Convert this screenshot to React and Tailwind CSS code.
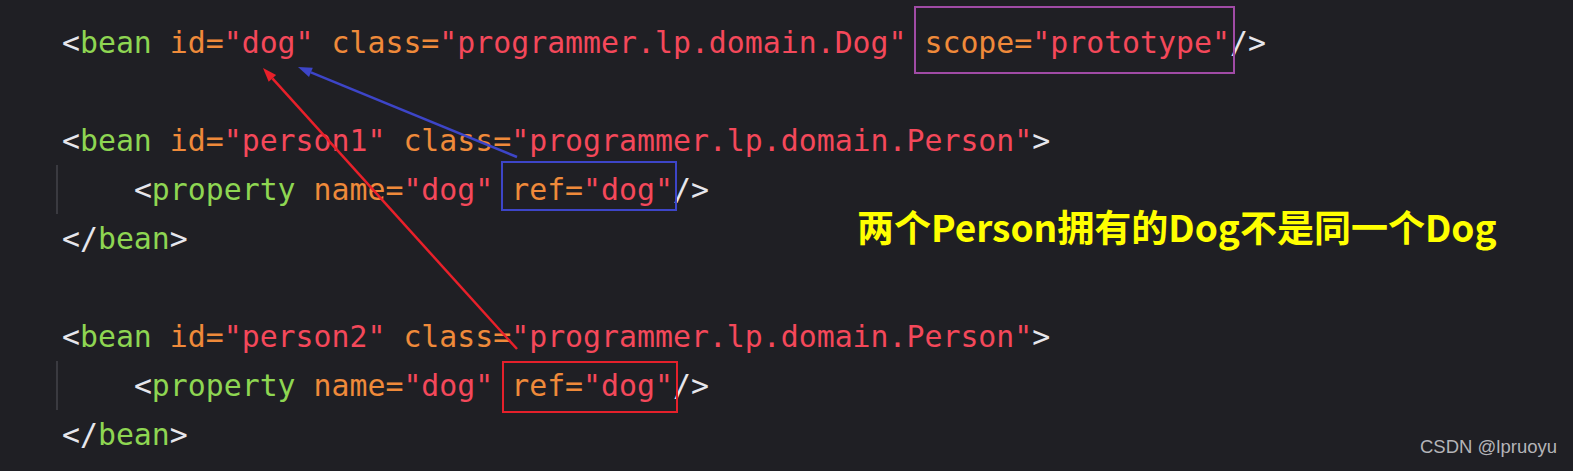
import React from "react";

const G = ({ children }) => <span className="text-[#8ed652]">{children}</span>;
const W = ({ children }) => <span className="text-[#e6e6ec]">{children}</span>;
const O = ({ children }) => <span className="text-[#ef8a3a]">{children}</span>;
const R = ({ children }) => <span className="text-[#f4485a]">{children}</span>;

function Line({ children, guide }) {
  if (guide) {
    return (
      <div className="h-[49px] -ml-[6px] pl-[4px] border-l-2 border-[#3a3a40]">{children}</div>
    );
  }
  return <div className="h-[49px]">{children}</div>;
}

function Boxed({ children, color, cls }) {
  return (
    <span className="relative">
      {children}
      <span className={`absolute border-2 ${color} ${cls}`} />
    </span>
  );
}

export default function App() {
  return (
    <div className="relative w-[1573px] h-[471px] bg-[#1f1f24] overflow-hidden">
      <div
        className="pl-[62px] pt-[18px] text-[29.85px] leading-[49px] whitespace-pre"
        style={{ fontFamily: '"DejaVu Sans Mono", monospace' }}
      >
        <Line>
          <W>&lt;</W><G>bean</G> <O>id=</O><R>"dog"</R> <O>class=</O><R>"programmer.lp.domain.Dog"</R>{" "}
          <Boxed color="border-[#a04ba6]" cls="-left-[10px] -right-[5px] -top-[19px] -bottom-[14px]">
            <O>scope=</O><R>"prototype"</R>
          </Boxed>
          <W>/&gt;</W>
        </Line>
        <Line />
        <Line>
          <W>&lt;</W><G>bean</G> <O>id=</O><R>"person1"</R> <O>class=</O><R>"programmer.lp.domain.Person"</R><W>&gt;</W>
        </Line>
        <Line guide>
          {"    "}<W>&lt;</W><G>property</G> <O>name=</O><R>"dog"</R>{" "}
          <Boxed color="border-[#3d45c8]" cls="-left-[10px] -right-[4px] -top-[11px] -bottom-[4px]">
            <O>ref=</O><R>"dog"</R>
          </Boxed>
          <W>/&gt;</W>
        </Line>
        <Line>
          <W>&lt;/</W><G>bean</G><W>&gt;</W>
        </Line>
        <Line />
        <Line>
          <W>&lt;</W><G>bean</G> <O>id=</O><R>"person2"</R> <O>class=</O><R>"programmer.lp.domain.Person"</R><W>&gt;</W>
        </Line>
        <Line guide>
          {"    "}<W>&lt;</W><G>property</G> <O>name=</O><R>"dog"</R>{" "}
          <Boxed color="border-[#e5202b]" cls="-left-[9px] -right-[5px] -top-[7px] -bottom-[10px]">
            <O>ref=</O><R>"dog"</R>
          </Boxed>
          <W>/&gt;</W>
        </Line>
        <Line>
          <W>&lt;/</W><G>bean</G><W>&gt;</W>
        </Line>
      </div>

      <svg className="absolute inset-0 pointer-events-none" width="1573" height="471">
        <line x1="517" y1="157" x2="310.9" y2="72.3" stroke="#3d45c8" strokeWidth="2.5" />
        <polygon points="298,67 312.8,67.7 309.0,76.9" fill="#3d45c8" />
        <line x1="517" y1="349" x2="272.4" y2="78.4" stroke="#e8202a" strokeWidth="2.5" />
        <polygon points="263,68 276.1,75.0 268.7,81.8" fill="#e8202a" />
      </svg>

      <div
        className="absolute left-[857px] top-[201px] text-[37px] font-bold leading-[50px] text-[#ffff00] whitespace-nowrap"
        style={{ fontFamily: '"Noto Sans CJK SC", "Noto Sans", sans-serif' }}
      >
        两个Person拥有的Dog不是同一个Dog
      </div>

      <div
        className="absolute right-[16px] bottom-[10px] text-[18.5px] text-[#b4b4b8]"
        style={{ fontFamily: '"Liberation Sans", Arial, sans-serif' }}
      >
        CSDN @lpruoyu
      </div>
    </div>
  );
}
